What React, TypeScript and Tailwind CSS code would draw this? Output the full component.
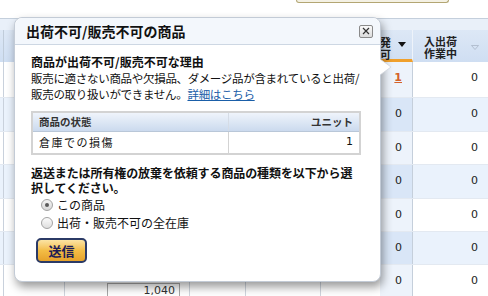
import React from "react";

const jp = "font-['Noto_Sans_CJK_JP','Noto_Sans',sans-serif]";
const num = "font-['DejaVu_Sans',sans-serif]";

const rowHeights = [36, 34, 33, 34, 33, 33, 33];

function Row({ i, h }: { i: number; h: number }) {
  const blue = i % 2 === 1;
  const last = i === rowHeights.length - 1;
  return (
    <div className={`flex shrink-0 border-b border-[#e3e9f1] ${blue ? "bg-[#eaf2fc]" : "bg-white"}`} style={{ height: h }}>
      <div className="w-[4px] border-r border-[#c9d1dc]" />
      <div className="w-[61px] border-r border-[#d0d6de]" />
      <div className="w-[125px] border-r border-[#d0d6de] relative">
        {last && (
          <div className={`absolute left-[42px] top-[18px] w-[73px] h-[15px] border border-b-0 border-[#a8a8a8] bg-white text-right pr-[4px] text-[11px] leading-[13px] text-[#333] ${num}`}>1,040</div>
        )}
      </div>
      <div className="w-[56px] border-r border-[#d0d6de]" />
      <div className="w-[75px] border-r border-[#d0d6de]" />
      <div className="w-[59px]" />
      <div className={`w-[33px] border-r border-[#c5cfdb] flex justify-end pr-[10px] pt-[8px] text-[11px] ${num} ${blue ? "bg-[#d9e6f7]" : "bg-[#edf3fb]"}`}>
        {i === 0 ? (
          <span className="text-[#d5622a] font-bold underline">1</span>
        ) : (
          <span className="text-[#222]">0</span>
        )}
      </div>
      <div className={`w-[75px] flex justify-end pr-[10px] pt-[8px] text-[11px] text-[#222] ${num}`}>0</div>
    </div>
  );
}

export default function App() {
  return (
    <div className={`relative w-[488px] h-[296px] overflow-hidden bg-white ${jp}`}>
      {/* top strip */}
      <div className="h-[18px] flex">
        <div className="ml-[296px] w-[153px] h-[3px] border border-t-0 border-[#b3a673] rounded-b-[3px] bg-[#f4f1e4]" />
      </div>
      {/* header */}
      <div className="h-[44px] flex flex-col border-t border-[#c4cfdc]">
        <div className="h-[11px] bg-[#e9f0f9]" />
        <div className="flex-1 flex bg-gradient-to-b from-[#dde8f6] to-[#cfdef2]">
          <div className="w-[4px] border-r border-[#c0ccda]" />
          <div className="w-[61px]" />
          <div className="w-[125px]" />
          <div className="w-[56px]" />
          <div className="w-[75px]" />
          <div className="w-[59px]" />
          <div className="w-[33px] relative border-b-[3px] border-[#f0a02c] border-r border-r-[#eef3fa]">
            <div className="absolute right-[21px] top-[6px] text-[11px] leading-[12px] font-bold text-[#222] text-right whitespace-nowrap">
              <div>入荷未発</div>
              <div>販売不可</div>
            </div>
            <svg className="absolute left-[18px] top-[12px]" width="8" height="5" viewBox="0 0 8 5">
              <path d="M0 0 L8 0 L4 5 Z" fill="#111" />
            </svg>
          </div>
          <div className="w-[75px] relative">
            <div className="absolute left-[11px] top-[5px] text-[11px] leading-[12px] font-bold text-[#222] text-center whitespace-nowrap">
              <div>入出荷</div>
              <div>作業中</div>
            </div>
            <svg className="absolute left-[58px] top-[15px]" width="8" height="5" viewBox="0 0 8 5">
              <path d="M0.5 0.5 L7.5 0.5 L4 4.5 Z" fill="none" stroke="#a9b6c6" strokeWidth="0.8" />
            </svg>
          </div>
        </div>
      </div>
      {/* rows */}
      <div className="flex flex-col">
        {rowHeights.map((h, i) => (
          <Row key={i} i={i} h={h} />
        ))}
      </div>

      {/* popover */}
      <div className="absolute left-[14px] top-[17px] w-[367px] h-[265px] bg-white border border-[#c3cbd6] rounded-[8px] shadow-[2px_5px_10px_rgba(0,0,0,0.4)] flex flex-col">
        {/* pointer */}
        <svg className="absolute left-[365px] top-[41px]" width="12" height="16" viewBox="0 0 12 16">
          <path d="M0 0 L11 8 L0 16 Z" fill="white" />
          <path d="M0 0 L11 8 L0 16" fill="none" stroke="#d0d6de" strokeWidth="0.8" />
        </svg>
        <div className="h-[27px] shrink-0 flex items-center justify-between pl-[11px] pr-[7px] bg-[#f3f7fc] rounded-t-[8px] border-b border-[#cdd7e3]">
          <span className="text-[14px] font-bold text-[#111] leading-none">出荷不可/販売不可の商品</span>
          <div className="w-[14px] h-[13px] border border-[#8a8a8a] rounded-[2px] bg-gradient-to-b from-[#fafafa] to-[#dcdcdc] flex items-center justify-center">
            <svg width="8" height="8" viewBox="0 0 8 8">
              <path d="M1 1 L7 7 M7 1 L1 7" stroke="#333" strokeWidth="1.2" />
            </svg>
          </div>
        </div>
        <div className="pl-[16px] pr-[18px] pt-[9px] flex flex-col">
          <div className="text-[12px] leading-[16px] font-bold text-[#111]">商品が出荷不可/販売不可な理由</div>
          <div className="text-[11.5px] leading-[16px] text-[#111] tracking-[-0.3px] whitespace-nowrap">
            販売に適さない商品や欠損品、ダメージ品が含まれていると出荷/
            <br />
            販売の取り扱いができません。<span className="text-[#1a5ea8] underline">詳細はこちら</span>
          </div>
          <div className="mt-[9px] w-[330px] border-2 border-[#d3d3d3]">
            <div className="h-[19px] flex items-center bg-gradient-to-b from-[#eff4fb] to-[#cbdaee] border-b border-[#b9c7d8] text-[10.5px] font-bold text-[#333]">
              <div className="w-[196px] pl-[6px] border-r border-[#d5dce6] h-full flex items-center">商品の状態</div>
              <div className="flex-1 text-right pr-[6px]">ユニット</div>
            </div>
            <div className="h-[21px] flex items-center text-[11px] text-[#111]">
              <div className="w-[196px] pl-[6px] border-r border-[#d3d3d3] h-full flex items-center tracking-[1.5px]">倉庫での損傷</div>
              <div className={`flex-1 text-right pr-[6px] ${num}`}>1</div>
            </div>
          </div>
          <div className="mt-[10px] text-[12px] leading-[15px] font-bold text-[#111] tracking-[-0.1px] whitespace-nowrap">
            返送または所有権の放棄を依頼する商品の種類を以下から選
            <br />
            択してください。
          </div>
          <div className="mt-[4px] pl-[10px] flex flex-col gap-[6px] text-[12px] text-[#111]">
            <div className="flex items-center gap-[4px] h-[12px]">
              <span className="w-[12px] h-[12px] rounded-full border border-[#a3a3a3] bg-gradient-to-b from-[#f4f4f4] to-[#d8d8d8] flex items-center justify-center">
                <span className="w-[4px] h-[4px] rounded-full bg-[#5a5a5a]" />
              </span>
              <span className="leading-none">この商品</span>
            </div>
            <div className="flex items-center gap-[4px] h-[12px]">
              <span className="w-[12px] h-[12px] rounded-full border border-[#a3a3a3] bg-gradient-to-b from-[#fbfbfb] to-[#dedede]" />
              <span className="leading-none">出荷・販売不可の全在庫</span>
            </div>
          </div>
          <div className="mt-[9px] ml-[5px] w-[51px] h-[25px] rounded-[5px] border-2 border-[#2b3a66] bg-gradient-to-b from-[#fbe4a3] via-[#f3bd45] to-[#e6a22a] flex items-center justify-center text-[13px] font-bold text-[#1c1c55]">
            送信
          </div>
        </div>
      </div>
    </div>
  );
}
